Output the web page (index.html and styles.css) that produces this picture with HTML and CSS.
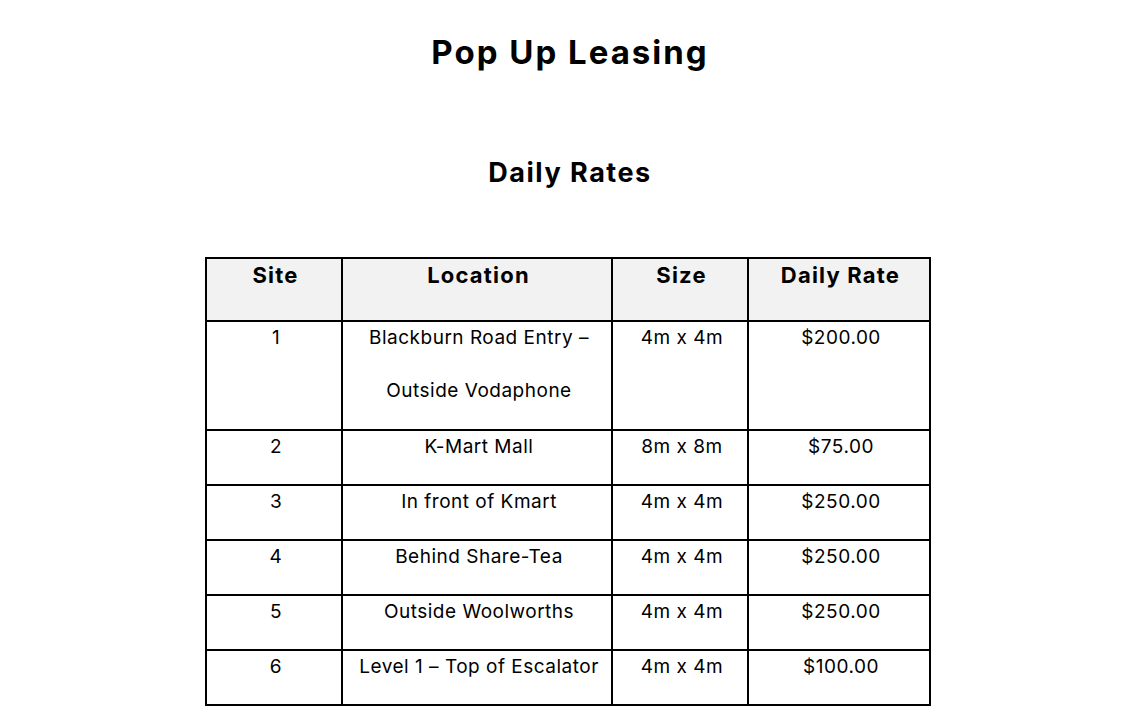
FILE: index.html
```html
<!DOCTYPE html>
<html lang="en">
<head>
<meta charset="utf-8">
<title>Pop Up Leasing</title>
<link rel="stylesheet" href="styles.css">
</head>
<body>
<main class="page">
  <h1 class="title">Pop Up Leasing</h1>
  <h2 class="subtitle">Daily Rates</h2>
  <table class="rates">
    <colgroup>
      <col class="c-site">
      <col class="c-loc">
      <col class="c-size">
      <col class="c-rate">
    </colgroup>
    <thead>
      <tr>
        <th><span class="hd">Site</span></th>
        <th><span class="hd">Location</span></th>
        <th><span class="hd">Size</span></th>
        <th><span class="hd">Daily Rate</span></th>
      </tr>
    </thead>
    <tbody>
      <tr class="tall">
        <td><span class="ln">1</span></td>
        <td><span class="ln">Blackburn Road Entry –</span><span class="ln">Outside Vodaphone</span></td>
        <td><span class="ln">4m x 4m</span></td>
        <td><span class="ln">$200.00</span></td>
      </tr>
      <tr>
        <td><span class="ln">2</span></td>
        <td><span class="ln">K-Mart Mall</span></td>
        <td><span class="ln">8m x 8m</span></td>
        <td><span class="ln">$75.00</span></td>
      </tr>
      <tr>
        <td><span class="ln">3</span></td>
        <td><span class="ln">In front of Kmart</span></td>
        <td><span class="ln">4m x 4m</span></td>
        <td><span class="ln">$250.00</span></td>
      </tr>
      <tr>
        <td><span class="ln">4</span></td>
        <td><span class="ln">Behind Share-Tea</span></td>
        <td><span class="ln">4m x 4m</span></td>
        <td><span class="ln">$250.00</span></td>
      </tr>
      <tr>
        <td><span class="ln">5</span></td>
        <td><span class="ln">Outside Woolworths</span></td>
        <td><span class="ln">4m x 4m</span></td>
        <td><span class="ln">$250.00</span></td>
      </tr>
      <tr>
        <td><span class="ln">6</span></td>
        <td><span class="ln">Level 1 – Top of Escalator</span></td>
        <td><span class="ln">4m x 4m</span></td>
        <td><span class="ln">$100.00</span></td>
      </tr>
    </tbody>
  </table>
</main>
</body>
</html>
```

FILE: styles.css
```css
html, body {
  margin: 0;
  padding: 0;
  background: #ffffff;
}

body {
  font-family: Inter, "Liberation Sans", Arial, sans-serif;
  color: #000000;
}

.page {
  display: flex;
  flex-direction: column;
  align-items: center;
  padding-top: 30px;
}

.title {
  margin: 0;
  font-size: 33px;
  font-weight: 700;
  letter-spacing: 2px;
  line-height: 44px;
  text-align: center;
}

.subtitle {
  margin: 81px 0 0;
  font-size: 27px;
  font-weight: 700;
  letter-spacing: 1.5px;
  line-height: 36px;
  text-align: center;
}

.rates {
  margin: 66px 0 0 -4px;
  border-collapse: collapse;
  table-layout: fixed;
  width: 724px;
}

.c-site { width: 136px; }
.c-loc { width: 270px; }
.c-size { width: 136px; }
.c-rate { width: 182px; }

.rates th,
.rates td {
  border: 2px solid #000000;
  padding: 0;
  text-align: center;
  vertical-align: top;
}

.rates th {
  background: #f2f2f2;
  height: 63px;
  box-sizing: border-box;
}

.hd {
  display: block;
  padding: 3px 0 0 3px;
  font-size: 22px;
  font-weight: 700;
  letter-spacing: 1.2px;
  line-height: 26px;
}

.ln {
  display: block;
  box-sizing: border-box;
  height: 53px;
  padding: 5px 0 0 4px;
  font-size: 19px;
  font-weight: 400;
  letter-spacing: 0.5px;
  line-height: 22px;
}

.tall .ln + .ln {
  height: 54px;
}
```
